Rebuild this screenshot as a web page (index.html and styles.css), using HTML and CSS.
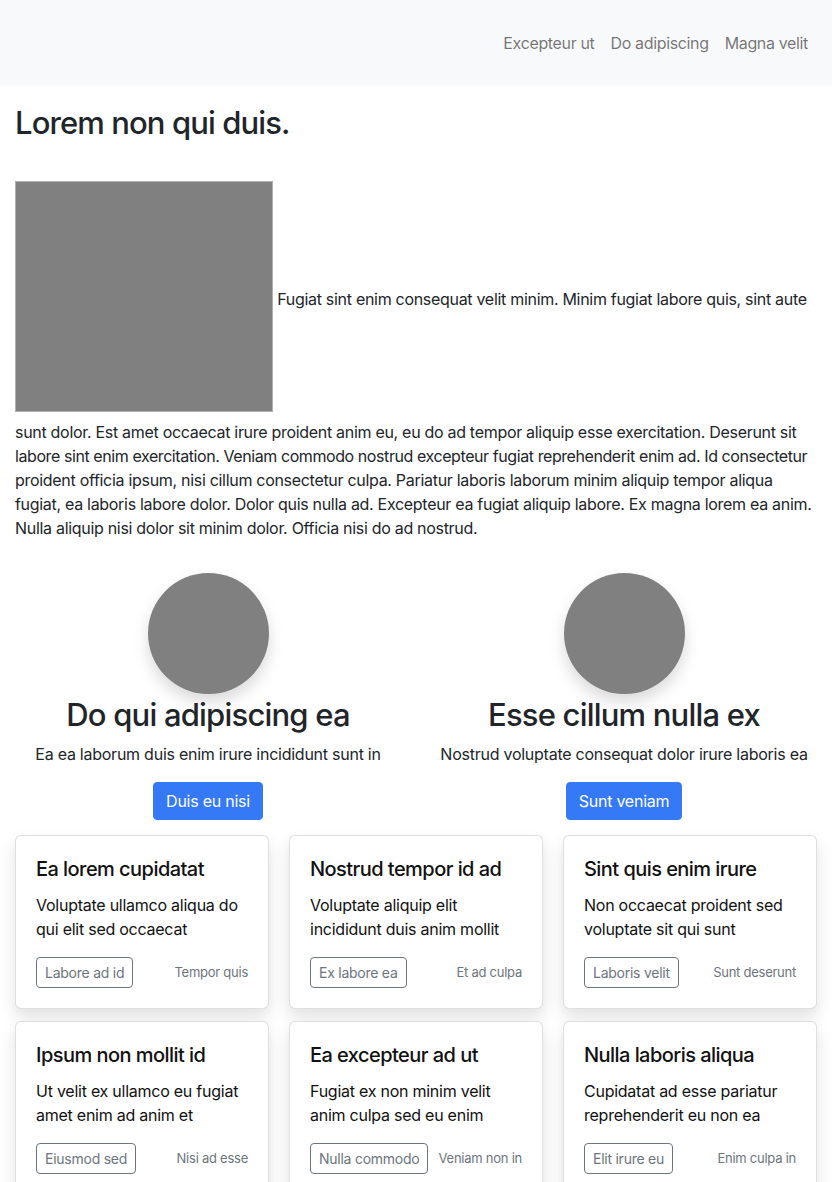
FILE: index.html
```html
<!DOCTYPE html>
<html lang="la">
<head>
<meta charset="utf-8">
<title>Lorem non qui duis.</title>
<link rel="stylesheet" href="styles.css">
</head>
<body>
<nav class="navbar">
  <ul class="nav-links">
    <li><a href="#">Excepteur ut</a></li>
    <li><a href="#">Do adipiscing</a></li>
    <li><a href="#">Magna velit</a></li>
  </ul>
</nav>
<main class="container">
  <h1 class="page-title">Lorem non qui duis.</h1>
  <p class="intro"><span class="placeholder-img"></span> Fugiat sint enim consequat velit minim. Minim fugiat labore quis, sint aute sunt dolor. Est amet occaecat irure proident anim eu, eu do ad tempor aliquip esse exercitation. Deserunt sit <span class="tight">labore sint enim exercitation. Veniam commodo nostrud excepteur fugiat reprehenderit enim ad. Id consectetur</span> proident officia ipsum, nisi cillum consectetur culpa. Pariatur laboris laborum minim aliquip tempor aliqua fugiat, ea laboris labore dolor. Dolor quis nulla ad. Excepteur ea fugiat aliquip labore. Ex magna lorem ea anim. Nulla aliquip nisi dolor sit minim dolor. Officia nisi do ad nostrud.</p>

  <section class="features">
    <div class="feature">
      <div class="avatar"></div>
      <h2 class="feature-title">Do qui adipiscing ea</h2>
      <p class="feature-text">Ea ea laborum duis enim irure incididunt sunt in</p>
      <a href="#" class="btn-primary">Duis eu nisi</a>
    </div>
    <div class="feature">
      <div class="avatar"></div>
      <h2 class="feature-title">Esse cillum nulla ex</h2>
      <p class="feature-text">Nostrud voluptate consequat dolor irure laboris ea</p>
      <a href="#" class="btn-primary">Sunt veniam</a>
    </div>
  </section>

  <section class="cards">
    <div class="card">
      <h3 class="card-title">Ea lorem cupidatat</h3>
      <p class="card-text">Voluptate ullamco aliqua do qui elit sed occaecat</p>
      <div class="card-foot"><a href="#" class="btn-outline">Labore ad id</a><small class="muted">Tempor quis</small></div>
    </div>
    <div class="card">
      <h3 class="card-title">Nostrud tempor id ad</h3>
      <p class="card-text">Voluptate aliquip elit incididunt duis anim mollit</p>
      <div class="card-foot"><a href="#" class="btn-outline">Ex labore ea</a><small class="muted">Et ad culpa</small></div>
    </div>
    <div class="card">
      <h3 class="card-title">Sint quis enim irure</h3>
      <p class="card-text">Non occaecat proident sed voluptate sit qui sunt</p>
      <div class="card-foot"><a href="#" class="btn-outline">Laboris velit</a><small class="muted">Sunt deserunt</small></div>
    </div>
    <div class="card">
      <h3 class="card-title">Ipsum non mollit id</h3>
      <p class="card-text">Ut velit ex ullamco eu fugiat amet enim ad anim et</p>
      <div class="card-foot"><a href="#" class="btn-outline">Eiusmod sed</a><small class="muted">Nisi ad esse</small></div>
    </div>
    <div class="card">
      <h3 class="card-title">Ea excepteur ad ut</h3>
      <p class="card-text">Fugiat ex non minim velit anim culpa sed eu enim</p>
      <div class="card-foot"><a href="#" class="btn-outline">Nulla commodo</a><small class="muted">Veniam non in</small></div>
    </div>
    <div class="card">
      <h3 class="card-title">Nulla laboris aliqua</h3>
      <p class="card-text">Cupidatat ad esse pariatur reprehenderit eu non ea</p>
      <div class="card-foot"><a href="#" class="btn-outline">Elit irure eu</a><small class="muted">Enim culpa in</small></div>
    </div>
  </section>
</main>
</body>
</html>
```

FILE: styles.css
```css
* { box-sizing: border-box; }

html, body {
  margin: 0;
  padding: 0;
}

body {
  font-family: Inter, "Noto Sans", "Liberation Sans", sans-serif;
  font-size: 16px;
  line-height: 1.5;
  letter-spacing: -0.25px;
  color: #212529;
  background: #fff;
}

a { text-decoration: none; }

.navbar {
  background: #f8f9fa;
  height: 86px;
  display: flex;
  align-items: center;
  justify-content: flex-end;
  padding: 0 16px;
}

.nav-links {
  list-style: none;
  margin: 0;
  padding: 0;
  display: flex;
}

.nav-links a {
  display: block;
  padding: 8px;
  letter-spacing: -0.35px;
  color: rgba(0, 0, 0, 0.55);
}

.container {
  padding: 0 15px;
}

.page-title {
  font-size: 31px;
  font-weight: 500;
  line-height: 1.2;
  letter-spacing: -0.9px;
  margin: 18px 0 40px;
}

.intro {
  margin: 0 0 33px;
  letter-spacing: -0.3px;
}

.intro .tight {
  letter-spacing: -0.42px;
}

.placeholder-img {
  display: inline-block;
  width: 258px;
  height: 231px;
  background: #808080;
  border: 1px solid #b0b0b0;
  vertical-align: middle;
  margin-bottom: 8px;
}

.features {
  display: grid;
  grid-template-columns: 1fr 1fr;
  margin: 0 -15px;
}

.feature {
  display: flex;
  flex-direction: column;
  align-items: center;
  text-align: center;
}

.avatar {
  width: 121px;
  height: 121px;
  border-radius: 50%;
  background: #808080;
  box-shadow: 0 8px 16px rgba(0, 0, 0, 0.15);
}

.feature-title {
  font-size: 31px;
  font-weight: 500;
  line-height: 1.2;
  letter-spacing: -0.8px;
  margin: 2px 0 9px;
}

.feature-text {
  margin: 0 0 16px;
}

.btn-primary {
  display: inline-block;
  background: #3579f6;
  color: #fff;
  border: 1px solid #3579f6;
  border-radius: 4px;
  padding: 6px 12px;
  line-height: 24px;
}

.cards {
  display: grid;
  grid-template-columns: repeat(3, 1fr);
  column-gap: 20px;
  row-gap: 12px;
  margin-top: 15px;
}

.card {
  background: #fff;
  border: 1px solid rgba(0, 0, 0, 0.125);
  border-radius: 6px;
  padding: 21px 20px 20px;
  box-shadow: 0 8px 16px rgba(0, 0, 0, 0.12);
}

.card-title {
  font-size: 20px;
  font-weight: 500;
  line-height: 1.2;
  letter-spacing: -0.55px;
  margin: 0 0 12px;
  color: #111;
}

.card-text {
  margin: 0 0 16px;
  color: #111;
}

.card-foot {
  display: flex;
  justify-content: space-between;
  align-items: center;
}

.btn-outline {
  display: inline-block;
  font-size: 14px;
  line-height: 21px;
  padding: 4px 8px;
  color: #6c757d;
  border: 1px solid #6c757d;
  border-radius: 4px;
}

.muted {
  font-size: 13px;
  color: #6c757d;
}
```
